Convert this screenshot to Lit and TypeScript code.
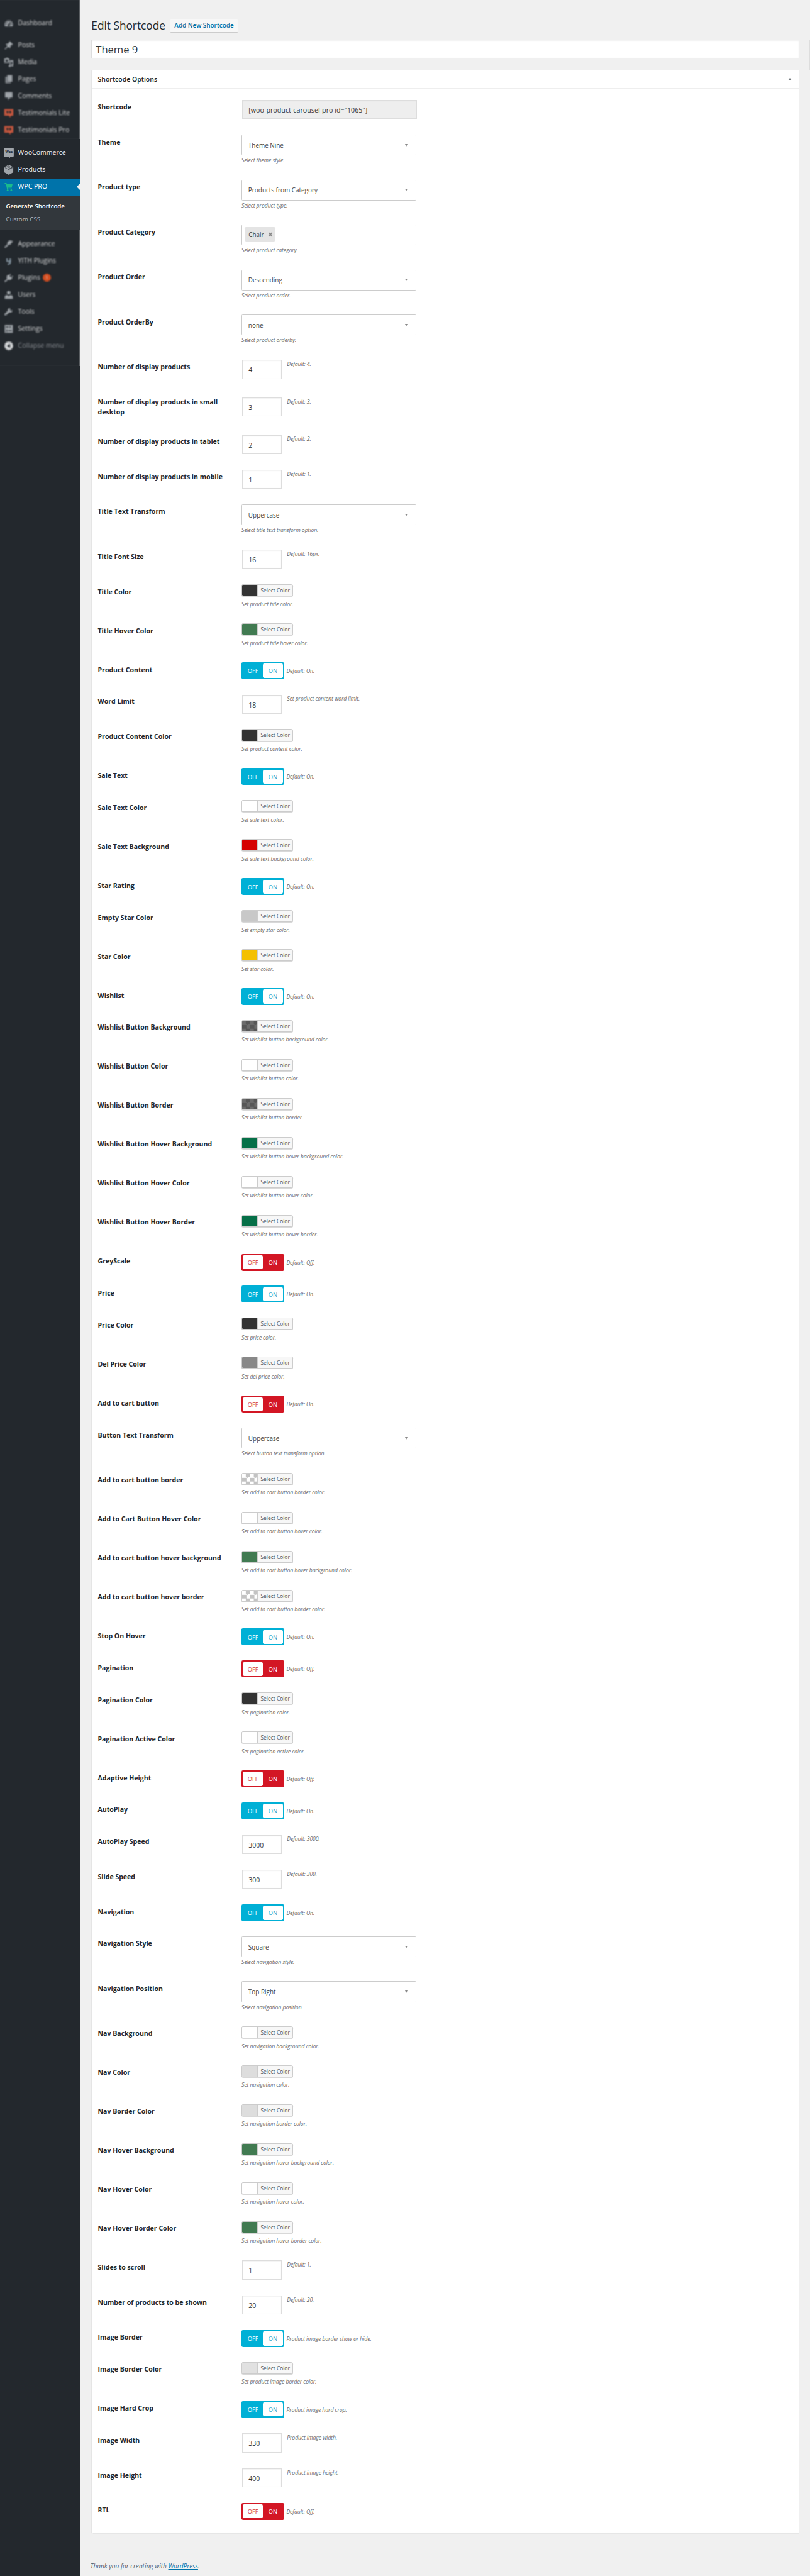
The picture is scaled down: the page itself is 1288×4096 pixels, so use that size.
import { LitElement, html, svg, css, nothing } from "lit";
import { classMap } from "lit/directives/class-map.js";

type Kind = "code" | "select" | "tags" | "number" | "color" | "toggle";
interface Field {
  kind: Kind;
  label: string;
  value: string;
  note: string;
}

const f = (kind: Kind, label: string, value: string, note = ""): Field => ({ kind, label, value, note });

const FIELDS: Field[] = [
  f("code", "Shortcode", '[woo-product-carousel-pro id="1065"]'),
  f("select", "Theme", "Theme Nine", "Select theme style."),
  f("select", "Product type", "Products from Category", "Select product type."),
  f("tags", "Product Category", "Chair", "Select product category."),
  f("select", "Product Order", "Descending", "Select product order."),
  f("select", "Product OrderBy", "none", "Select product orderby."),
  f("number", "Number of display products", "4", "Default: 4."),
  f("number", "Number of display products in small desktop", "3", "Default: 3."),
  f("number", "Number of display products in tablet", "2", "Default: 2."),
  f("number", "Number of display products in mobile", "1", "Default: 1."),
  f("select", "Title Text Transform", "Uppercase", "Select title text transform option."),
  f("number", "Title Font Size", "16", "Default: 16px."),
  f("color", "Title Color", "#333333", "Set product title color."),
  f("color", "Title Hover Color", "#417a51", "Set product title hover color."),
  f("toggle", "Product Content", "on", "Default: On."),
  f("number", "Word Limit", "18", "Set product content word limit."),
  f("color", "Product Content Color", "#333333", "Set product content color."),
  f("toggle", "Sale Text", "on", "Default: On."),
  f("color", "Sale Text Color", "#ffffff", "Set sale text color."),
  f("color", "Sale Text Background", "#d50000", "Set sale text background color."),
  f("toggle", "Star Rating", "on", "Default: On."),
  f("color", "Empty Star Color", "#c8c8c8", "Set empty star color."),
  f("color", "Star Color", "#f4c000", "Set star color."),
  f("toggle", "Wishlist", "on", "Default: On."),
  f("color", "Wishlist Button Background", "dim", "Set wishlist button background color."),
  f("color", "Wishlist Button Color", "#ffffff", "Set wishlist button color."),
  f("color", "Wishlist Button Border", "dim", "Set wishlist button border."),
  f("color", "Wishlist Button Hover Background", "#067048", "Set wishlist button hover background color."),
  f("color", "Wishlist Button Hover Color", "#ffffff", "Set wishlist button hover color."),
  f("color", "Wishlist Button Hover Border", "#067048", "Set wishlist button hover border."),
  f("toggle", "GreyScale", "off", "Default: Off."),
  f("toggle", "Price", "on", "Default: On."),
  f("color", "Price Color", "#333333", "Set price color."),
  f("color", "Del Price Color", "#888888", "Set del price color."),
  f("toggle", "Add to cart button", "off", "Default: On."),
  f("select", "Button Text Transform", "Uppercase", "Select button text transform option."),
  f("color", "Add to cart button border", "clear", "Set add to cart button border color."),
  f("color", "Add to Cart Button Hover Color", "#ffffff", "Set add to cart button hover color."),
  f("color", "Add to cart button hover background", "#417a51", "Set add to cart button hover background color."),
  f("color", "Add to cart button hover border", "clear", "Set add to cart button border color."),
  f("toggle", "Stop On Hover", "on", "Default: On."),
  f("toggle", "Pagination", "off", "Default: Off."),
  f("color", "Pagination Color", "#333333", "Set pagination color."),
  f("color", "Pagination Active Color", "#ffffff", "Set pagination active color."),
  f("toggle", "Adaptive Height", "off", "Default: Off."),
  f("toggle", "AutoPlay", "on", "Default: On."),
  f("number", "AutoPlay Speed", "3000", "Default: 3000."),
  f("number", "Slide Speed", "300", "Default: 300."),
  f("toggle", "Navigation", "on", "Default: On."),
  f("select", "Navigation Style", "Square", "Select navigation style."),
  f("select", "Navigation Position", "Top Right", "Select navigation position."),
  f("color", "Nav Background", "#ffffff", "Set navigation background color."),
  f("color", "Nav Color", "#dddddd", "Set navigation color."),
  f("color", "Nav Border Color", "#dddddd", "Set navigation border color."),
  f("color", "Nav Hover Background", "#417a51", "Set navigation hover background color."),
  f("color", "Nav Hover Color", "#ffffff", "Set navigation hover color."),
  f("color", "Nav Hover Border Color", "#417a51", "Set navigation hover border color."),
  f("number", "Slides to scroll", "1", "Default: 1."),
  f("number", "Number of products to be shown", "20", "Default: 20."),
  f("toggle", "Image Border", "on", "Product image border show or hide."),
  f("color", "Image Border Color", "#e1e1e1", "Set product image border color."),
  f("toggle", "Image Hard Crop", "on", "Product image hard crop."),
  f("number", "Image Width", "330", "Product image width."),
  f("number", "Image Height", "400", "Product image height."),
  f("toggle", "RTL", "off", "Default: Off."),
];

/* Menu glyphs, all on a 20×20 grid. */
const ICONS: Record<string, unknown> = {
  dashboard: svg`<path fill-rule="evenodd" d="M2.6 16.5A8.3 8.3 0 1 1 17.4 16.5ZM9 5h2v2H9ZM5 6.5h2v2H5ZM13.5 6.5h1.6l-3 5.5a2.3 2.3 0 1 1-1.8-.9ZM3.6 10.5h2v2h-2ZM14.6 10.5h2v2h-2Z"/>`,
  posts: svg`<path d="M10.4 3.1l1.4-1.5 6.6 6.6-1.5 1.4-1.2-.2-2.8 2.8c.6 1.6.3 2.9-.9 4.1l-3.4-3.4-4.6 4.6-2.4 1.1 1.1-2.4 4.6-4.6L3.9 8.2c1.2-1.2 2.6-1.5 4.1-.9l2.7-2.8Z"/>`,
  media: svg`<path fill-rule="evenodd" d="M5 1h3l1 1.5h2V11H1V2.5h3ZM6 4.3a2.5 2.5 0 1 0 .01 0ZM12 6h7v10.5a2.2 2.2 0 1 1-2-2.2V9h-3v8.5a2.2 2.2 0 1 1-2-2.2Z"/>`,
  pages: svg`<path d="M7 2h10v13H7ZM3.5 5H6v11h8v2H3.5Z"/>`,
  comments: svg`<path d="M4 2h12q1.5 0 1.5 1.5v8q0 1.5-1.5 1.5h-3l-4.5 5v-5H4q-1.5 0-1.5-1.5v-8Q2.5 2 4 2Z"/>`,
  quote: svg`<path fill-rule="evenodd" d="M1 2h18v13h-4l-2.5 3.5L10 15H1ZM5.5 5.5v3.5h2L6 11h2l1.3-2V5.500ZM11 5.5v3.5h2l-1.5 2h2l1.3-2V5.500Z"/>`,
  woo: svg`<path d="M2 0h16q2 0 2 2v14q0 2-2 2h-5.5v2.5L9.5 18H2q-2 0-2-2V2Q0 0 2 0Z"/>`,
  products: svg`<path d="M10 0l9 4.6v10.4L10 20 1 15V4.6Z"/><path d="M2 5.6L10 9.6 18.5 5.2M6 3.3l8 4.2M8.6 2l8 4.2" fill="none" stroke="#23282d" stroke-width=".9"/>`,
  cart: svg`<path d="M1.8 2.5h3.6l.7 2.5h11.400l-1.700 7H7.700l.3 1.500h8v1.600H6.600L4.200 4.100H1.800Z"/><circle cx="7.8" cy="16.7" r="1.7"/><circle cx="15" cy="16.7" r="1.7"/>`,
  appearance: svg`<path d="M9 4.5C12 2 14.5 2.5 19 5c-2 .8-3 2-4.5 4.5-1.3 2.2-3.5 2.5-5 2.2L4 17.5c-1.5 1.2-3.2-.4-2.1-2L7.5 10C7 8 7.3 6 9 4.5Z"/>`,
  yith: svg`<path fill="none" stroke="#8fa0ad" stroke-width="2.6" d="M6.5 5v4q0 2 3.5 2 3 0 3-2V5v7q0 4-5 5"/>`,
  plugins: svg`<path d="M13.3 1.5l1.2 1.2-3 3 3 3 3-3 1.2 1.2-3 3 1.2 1.2-1.6 1.6c-2 2-5 2.2-7 .8L4 18l-2.5.5L2 16l4.500-4.200c-1.400-2-1.200-5 .8-7L9 3.200l1.300 1.300Z"/>`,
  users: svg`<circle cx="10" cy="5.5" r="3.5"/><path d="M2 18v-3.5q0-4 4.5-4.500L10 12.500 13.500 10q4.500.5 4.500 4.500V18Z"/>`,
  tools: svg`<path d="M17 6.5l-3 1-2-2 1-3.2c-3-.6-5.6 1.7-4.8 5.2L1.8 14c-1.7 1.9.8 4.5 2.8 2.8L11.2 11c3.8.9 6.7-1.5 5.8-4.5Z"/>`,
  settings: svg`<path fill-rule="evenodd" d="M2 2h16v16H2ZM4 5.5v1.6h5.5V5.500ZM12 4v4.500h1.600V4ZM5 11v5h1.600v-5ZM8.500 12.700v1.600H16v-1.600Z"/>`,
  collapse: svg`<path fill-rule="evenodd" d="M10 1.5a8.5 8.5 0 1 0 .01 0ZM12.5 5.8v8.4L6.5 10Z"/>`,
};

const MENU_TOP: [string, string][][] = [
  [["dashboard", "Dashboard"]],
  [
    ["posts", "Posts"],
    ["media", "Media"],
    ["pages", "Pages"],
    ["comments", "Comments"],
    ["quote", "Testimonials Lite"],
    ["quote", "Testimonials Pro"],
  ],
];
const MENU_BOTTOM: [string, string][] = [
  ["appearance", "Appearance"],
  ["yith", "YITH Plugins"],
  ["plugins", "Plugins"],
  ["users", "Users"],
  ["tools", "Tools"],
  ["settings", "Settings"],
  ["collapse", "Collapse menu"],
];

const icon = (name: string) => html`<svg class="icon ${name}" viewBox="0 0 20 20" width="20" height="20">${ICONS[name]}</svg>`;

class AdminMenu extends LitElement {
  static styles = css`
    :host {
      display: block;
      width: 161px;
      background: #23282d;
      color: #eee;
      font-size: 13.3px;
    }
    .group { padding-right: 1px; }
    .hazy { box-shadow: inset -3px 0 1.5px -1px #85888b; }
    .first { padding-top: 29px; }
    .gap { padding-top: 11px; }
    .tail { height: 24px; }
    .item {
      display: flex;
      align-items: center;
      gap: 8px;
      height: 34px;
      padding-left: 8px;
      line-height: 20px;
    }
    .hazy .item { filter: blur(1.3px); color: #d9dadb; }
    .hazy .collapse-row { color: #8d9196; }
    .icon { fill: #a0a5aa; flex: none; overflow: visible; }
    .icon.quote { fill: #c9583f; }
    .icon.collapse { fill: #d5d7d9; }
    .icon.cart { fill: #1abc8c; }
    .glyph { display: grid; width: 20px; height: 20px; }
    .glyph > * { grid-area: 1 / 1; }
    .woo-text {
      font-size: 7px;
      font-weight: 700;
      line-height: 17px;
      text-align: center;
      color: #23282d;
      letter-spacing: -0.3px;
    }
    .current {
      background: #0073aa;
      color: #fff;
      margin-right: -1px;
    }
    .arrow {
      margin-left: auto;
      border: 8px solid transparent;
      border-left-width: 0;
      border-right-color: #f0f0f0;
    }
    .badge {
      width: 17px;
      height: 17px;
      margin-left: -3px;
      border-radius: 50%;
      background: #d54e21;
      font-size: 9px;
      line-height: 17px;
      text-align: center;
    }
    .sub {
      height: 69px;
      box-sizing: border-box;
      padding: 8px 0 0 12px;
      margin-right: -1px;
      background: #32373c;
      font-size: 12.3px;
      color: #b4b9be;
    }
    .sub div { height: 27px; line-height: 27px; }
    .sub .on { color: #fff; font-weight: 600; font-size: 12.15px; }
  `;

  row(name: string, text: string) {
    return html`<div class="item ${name}-row">
      ${icon(name)}<span>${text}</span>
      ${name === "plugins" ? html`<span class="badge">1</span>` : nothing}
    </div>`;
  }

  render() {
    return html`
      <div class="group hazy first">
        ${MENU_TOP.map((g, i) => html`<div class=${i ? "gap" : ""}>${g.map(([n, t]) => this.row(n, t))}</div>`)}
      </div>
      <div class="group gap">
        <div class="item">
          <span class="glyph">${icon("woo")}<span class="woo-text">Woo</span></span><span>WooCommerce</span>
        </div>
        <div class="item">${icon("products")}<span>Products</span></div>
        <div class="item current">${icon("cart")}<span>WPC PRO</span><i class="arrow"></i></div>
        <div class="sub">
          <div class="on">Generate Shortcode</div>
          <div>Custom CSS</div>
        </div>
      </div>
      <div class="group hazy gap">${MENU_BOTTOM.map(([n, t]) => this.row(n, t))}<div class="tail"></div></div>
    `;
  }
}

class OptionRow extends LitElement {
  static properties = { field: { attribute: false } };
  declare field: Field;

  static styles = css`
    :host { display: block; }
    .row {
      display: grid;
      grid-template-columns: 287.5px 1fr;
      box-sizing: border-box;
    }
    .h-select, .h-tags { height: 90px; }
    .h-color { height: 78px; }
    .h-toggle { height: 64px; }
    .h-number, .h-code { min-height: 70px; }
    .label {
      max-width: 262px;
      padding: 5.7px 0 34.3px;
      font-size: 13.3px;
      font-weight: 700;
      line-height: 20px;
      color: #23282d;
    }
    .h-select .label, .h-tags .label, .h-color .label, .h-toggle .label { padding-bottom: 0; }
    .ctl { display: flex; color: #444; }
    .h-select .ctl, .h-tags .ctl, .h-color .ctl { flex-direction: column; align-items: flex-start; }
    .h-number .ctl, .h-code .ctl {
      align-self: center;
      height: 68px;
      padding-left: 1px;
      gap: 10px;
    }
    .note {
      font-size: 11px;
      font-style: italic;
      letter-spacing: -0.12px;
      line-height: 16px;
      color: #6c6c6c;
      white-space: nowrap;
    }
    .box {
      box-sizing: border-box;
      display: flex;
      align-items: center;
      width: 350px;
      height: 42px;
      border: 1px solid #ccc;
      border-radius: 2px;
      background: #fff;
      font-size: 12.5px;
    }
    .pick { justify-content: space-between; padding: 0 16px 0 12.5px; }
    .caret {
      border: 3.5px solid transparent;
      border-top: 5.5px solid #888;
      border-bottom: 0;
    }
    .h-select .note, .h-tags .note { margin-top: 2.5px; }
    .multi { padding: 0 5px 2px; }
    .tag {
      display: flex;
      align-items: center;
      gap: 8px;
      height: 29px;
      padding: 0 5px 0 8px;
      border-radius: 3px;
      background: #e4e4e4;
    }
    .input {
      box-sizing: border-box;
      width: 80px;
      height: 38px;
      padding: 2.5px 0 0 12px;
      border: 1px solid #ddd;
      background: #fff;
      box-shadow: inset 0 1px 2px rgba(0, 0, 0, 0.07);
      font-size: 13.2px;
      line-height: 33px;
      white-space: nowrap;
      color: #32373c;
    }
    .h-code .input { width: 350px; background: #eee; font-size: 13.5px; }
    .h-number .note { margin-top: 1px; }
    .picker {
      box-sizing: border-box;
      display: flex;
      width: 103px;
      height: 24px;
      overflow: hidden;
      border: 1px solid #ccc;
      border-radius: 3px;
      box-shadow: 0 1px 0 #ccc;
      background: #f7f7f7;
    }
    .swatch { width: 30px; border-right: 1px solid #ccc; }
    .clear { background: repeating-conic-gradient(#c3c3c3 0 25%, #fff 0 50%) 0 0 / 16px 16px; }
    .dim { background: repeating-conic-gradient(#575757 0 25%, #6c6c6c 0 50%) 0 0 / 16px 16px; }
    .pick-text { padding-left: 6px; font-size: 10.6px; line-height: 21.5px; color: #555; white-space: nowrap; }
    .h-color .note { margin-top: 8.3px; }
    .switch {
      box-sizing: border-box;
      display: flex;
      width: 86px;
      height: 34px;
      padding: 3px;
      border-radius: 3px;
      background: #00b0d6;
    }
    .switch.off { background: #d31624; }
    .seg {
      width: 40px;
      height: 28px;
      border-radius: 3px;
      font-size: 11.8px;
      line-height: 29px;
      text-align: center;
      color: #fff;
    }
    .seg.sel { background: #fff; color: #2fa8cf; }
    .off .seg.sel { color: #d33540; }
    .h-toggle .note { margin: 10px 0 0 4px; }
  `;

  control({ kind, value }: Field) {
    switch (kind) {
      case "select":
        return html`<div class="box pick"><span>${value}</span><i class="caret"></i></div>`;
      case "tags":
        return html`<div class="box multi">
          <span class="tag">${value}
            <svg viewBox="0 0 10 10" width="10" height="10"><path d="M1.5 1.2l7 7.6M8.5 1.2l-7 7.6" stroke="#888" stroke-width="2.3"/></svg>
          </span>
        </div>`;
      case "color": {
        const pattern = !value.startsWith("#");
        return html`<div class="picker">
          <span
            class=${classMap({ swatch: true, clear: value === "clear", dim: value === "dim" })}
            style=${pattern ? nothing : `background:${value}`}
          ></span>
          <span class="pick-text">Select Color</span>
        </div>`;
      }
      case "toggle": {
        const on = value === "on";
        return html`<div class=${classMap({ switch: true, off: !on })}>
          <span class=${classMap({ seg: true, sel: !on })}>OFF</span>
          <span class=${classMap({ seg: true, sel: on })}>ON</span>
        </div>`;
      }
      default:
        return html`<div class="input">${value}</div>`;
    }
  }

  render() {
    const d = this.field;
    return html`<div class="row h-${d.kind}">
      <div class="label">${d.label}</div>
      <div class="ctl">${this.control(d)}${d.note ? html`<span class="note">${d.note}</span>` : nothing}</div>
    </div>`;
  }
}

class AppRoot extends LitElement {
  static styles = css`
    :host {
      display: block;
      height: 4096px;
      overflow: hidden;
      background: #f0f0f0;
    }
    .page {
      zoom: 0.7945;
      display: flex;
      height: 5156px;
      font-family: "Open Sans", "Noto Sans", sans-serif;
      color: #23282d;
    }
    .main { width: 1439px; padding: 38px 0 0 21px; flex: none; box-sizing: border-box; }
    .head { display: flex; gap: 9px; height: 41px; }
    h1 {
      margin: 0;
      padding-left: 1px;
      font-size: 21.7px;
      font-weight: 400;
      line-height: 28px;
      white-space: nowrap;
    }
    .add {
      box-sizing: border-box;
      height: 27px;
      padding: 0 8px;
      border: 1px solid #ccc;
      border-radius: 2px;
      background: #f7f7f7;
      color: #0073aa;
      font-size: 12.47px;
      font-weight: 600;
      line-height: 25px;
      white-space: nowrap;
    }
    .title {
      box-sizing: border-box;
      height: 38px;
      padding: 0 8.5px;
      border: 1px solid #ddd;
      background: #fff;
      box-shadow: inset 0 1px 2px rgba(0, 0, 0, 0.07);
      color: #32373c;
      font-size: 21px;
      font-weight: 400;
      letter-spacing: -0.1px;
      line-height: 37px;
    }
    .panel {
      box-sizing: border-box;
      height: 4930px;
      margin-top: 23px;
      border: 1px solid #e5e5e5;
      background: #fff;
      box-shadow: 0 1px 1px rgba(0, 0, 0, 0.04);
    }
    .panel-head {
      display: flex;
      align-items: center;
      justify-content: space-between;
      height: 35px;
      padding: 0 13.5px 0 12.5px;
      border-bottom: 1px solid #eee;
      font-size: 13.22px;
      font-weight: 600;
    }
    .fold {
      border: 4px solid transparent;
      border-bottom: 6px solid #72777c;
      border-top: 0;
    }
    .rows { padding: 22px 0 0 12.5px; }
    .foot {
      margin: 57px 0 0 -1.5px;
      font-size: 12.68px;
      font-style: italic;
      line-height: 20px;
      color: #555d66;
    }
    .foot a { color: #0073aa; text-decoration: underline; }
    .side { width: 1px; margin: 79px 0 0 20px; height: 62px; background: #ddd; flex: none; }
  `;

  render() {
    return html`
      <div class="page">
        <admin-menu></admin-menu>
        <div class="main">
          <div class="head"><h1>Edit Shortcode</h1><span class="add">Add New Shortcode</span></div>
          <div class="title">Theme 9</div>
          <div class="panel">
            <div class="panel-head"><span>Shortcode Options</span><i class="fold"></i></div>
            <div class="rows">${FIELDS.map((d) => html`<option-row .field=${d}></option-row>`)}</div>
          </div>
          <div class="foot">Thank you for creating with <a>WordPress</a>.</div>
        </div>
        <div class="side"></div>
      </div>
    `;
  }
}

customElements.define("admin-menu", AdminMenu);
customElements.define("option-row", OptionRow);
customElements.define("app-root", AppRoot);
